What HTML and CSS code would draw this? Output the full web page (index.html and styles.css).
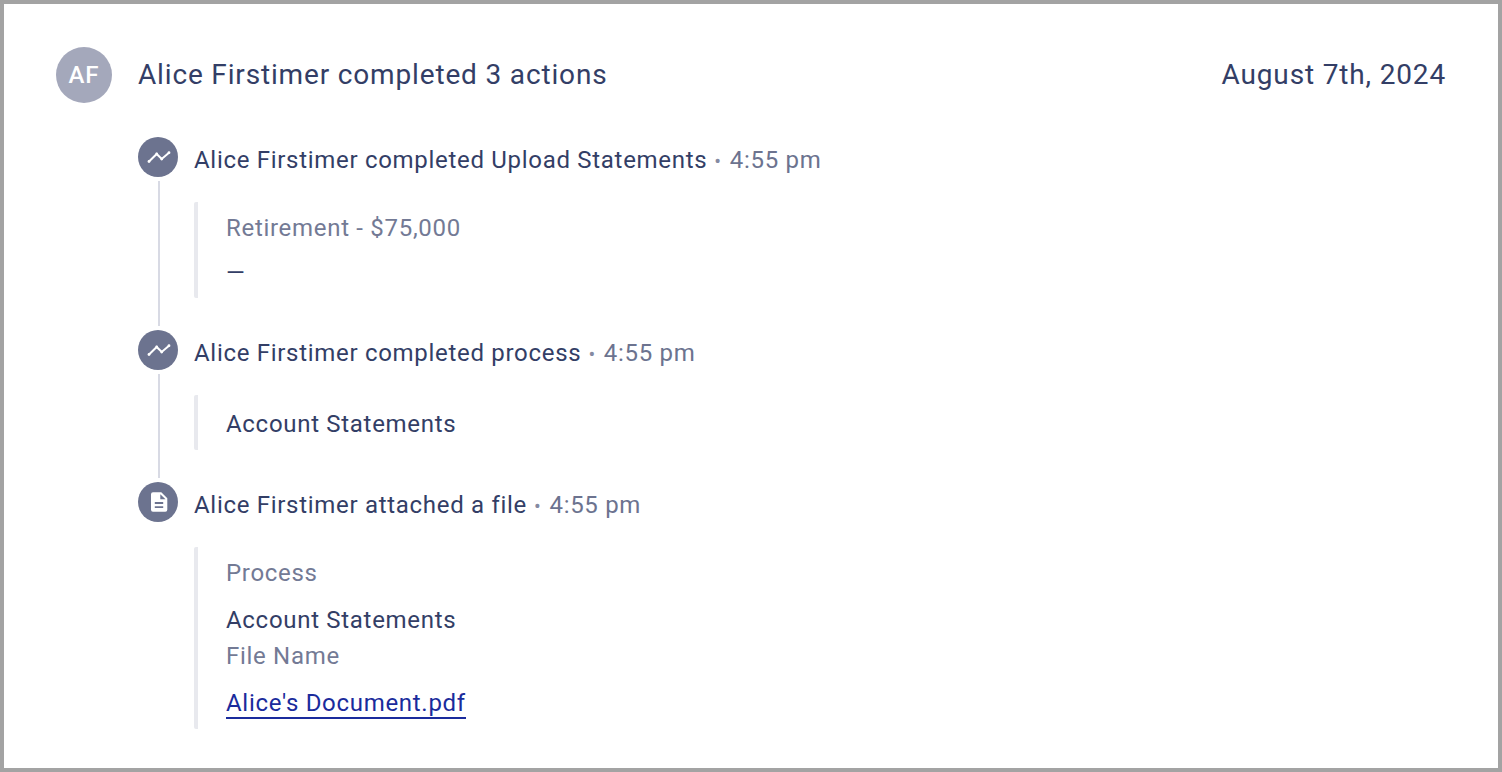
FILE: index.html
```html
<!DOCTYPE html>
<html lang="en">
<head>
<meta charset="utf-8">
<title>Activity</title>
<link rel="stylesheet" href="styles.css">
</head>
<body>
<main class="frame">
  <header class="head">
    <div class="avatar">AF</div>
    <h1 class="title">Alice Firstimer completed 3 actions</h1>
    <div class="date">August 7th, 2024</div>
  </header>
  <ol class="timeline">
    <li class="event">
      <div class="rail">
        <span class="dot"><svg viewBox="0 0 40 40" class="ico"><path class="trend" d="M11 24.500 18.700 17 23.700 22 31 15.700"/><circle cx="11" cy="24.500" r="1.400" class="fill"/><circle cx="18.700" cy="17" r="1.400" class="fill"/><circle cx="23.700" cy="22" r="1.400" class="fill"/><circle cx="31" cy="15.700" r="1.400" class="fill"/></svg></span>
        <span class="line"></span>
      </div>
      <div class="body">
        <div class="summary">Alice Firstimer completed Upload Statements<span class="sep">•</span><span class="time">4:55 pm</span></div>
        <div class="quote q1">
          <div class="muted">Retirement - $75,000</div>
          <div class="val dash">—</div>
        </div>
      </div>
    </li>
    <li class="event">
      <div class="rail">
        <span class="dot"><svg viewBox="0 0 40 40" class="ico"><path class="trend" d="M11 24.500 18.700 17 23.700 22 31 15.700"/><circle cx="11" cy="24.500" r="1.400" class="fill"/><circle cx="18.700" cy="17" r="1.400" class="fill"/><circle cx="23.700" cy="22" r="1.400" class="fill"/><circle cx="31" cy="15.700" r="1.400" class="fill"/></svg></span>
        <span class="line"></span>
      </div>
      <div class="body">
        <div class="summary">Alice Firstimer completed process<span class="sep">•</span><span class="time">4:55 pm</span></div>
        <div class="quote q2">
          <div class="val">Account Statements</div>
        </div>
      </div>
    </li>
    <li class="event">
      <div class="rail">
        <span class="dot"><svg viewBox="0 0 40 40" class="ico"><path class="fill" fill-rule="evenodd" d="M15 10.300h8.300l6 6V27.700a2 2 0 0 1-2 2H15a2 2 0 0 1-2-2V12.300a2 2 0 0 1 2-2ZM22.300 12.200V17.300h5.200ZM16.800 20v1.900h8.400V20ZM16.800 24.200v1.900h8.400v-1.900Z"/></svg></span>
      </div>
      <div class="body">
        <div class="summary">Alice Firstimer attached a file<span class="sep">•</span><span class="time">4:55 pm</span></div>
        <div class="quote q3">
          <div class="muted">Process</div>
          <div class="val v3">Account Statements</div>
          <div class="muted m3">File Name</div>
          <a class="link" href="#">Alice's Document.pdf</a>
        </div>
      </div>
    </li>
  </ol>
</main>
</body>
</html>
```
FILE: styles.css
```css
* { box-sizing: border-box; }
html, body { margin: 0; padding: 0; background: #fff; }
body { font-family: Roboto, "Liberation Sans", sans-serif; color: #333e66; }
.frame { width: 1502px; height: 772px; border: 4px solid #a3a3a3; padding: 43px 52px 0; overflow: hidden; background: #fff; }
.head { display: flex; align-items: center; height: 56px; }
.avatar { width: 56px; height: 56px; border-radius: 50%; background: #a4a8bb; color: #fff; display: flex; align-items: center; justify-content: center; font-size: 24px; font-weight: 500; letter-spacing: 1px; flex: none; }
.title { margin: 0 0 0 26px; font-size: 28px; line-height: 58px; font-weight: 400; letter-spacing: 0.84px; flex: 1; }
.date { font-size: 28px; line-height: 58px; letter-spacing: 0.84px; }
.timeline { list-style: none; margin: 34px 0 0 82px; padding: 0; }
.event { display: flex; }
.rail { width: 40px; flex: none; display: flex; flex-direction: column; align-items: center; }
.dot { width: 40px; height: 40px; border-radius: 50%; background: #6c738f; display: block; flex: none; }
.ico { width: 40px; height: 40px; display: block; }
.trend { fill: none; stroke: #fff; stroke-width: 2; }
.fill { fill: #fff; }
.line { width: 2px; flex: 1; background: #d8dae4; margin: 4px 0 4px 2px; }
.body { margin-left: 16px; flex: 1; }
.summary { height: 40px; line-height: 46px; font-size: 24px; letter-spacing: 0.7px; white-space: nowrap; }
.sep { color: #858aa2; margin: 0 8px 0 7px; font-size: 20px; }
.time { color: #6c738f; }
.quote { border-left: 4px solid #e8e9ee; border-radius: 2px; padding-left: 28px; font-size: 24px; letter-spacing: 0.7px; }
.q1 { margin: 25px 0 32px; height: 96px; padding-top: 10px; }
.q2 { margin: 25px 0 32px; height: 55px; padding-top: 13px; }
.q3 { margin: 25px 0 0; height: 182px; padding-top: 10px; }
.muted { color: #737a95; line-height: 32px; }
.val { line-height: 32px; }
.dash { margin-top: 13px; }
.v3 { margin-top: 15px; }
.m3 { margin-top: 4px; }
.link { display: inline-block; margin-top: 17px; line-height: 28px; color: #1a2b9c; text-decoration: none; border-bottom: 2px solid #1a2b9c; }
```
